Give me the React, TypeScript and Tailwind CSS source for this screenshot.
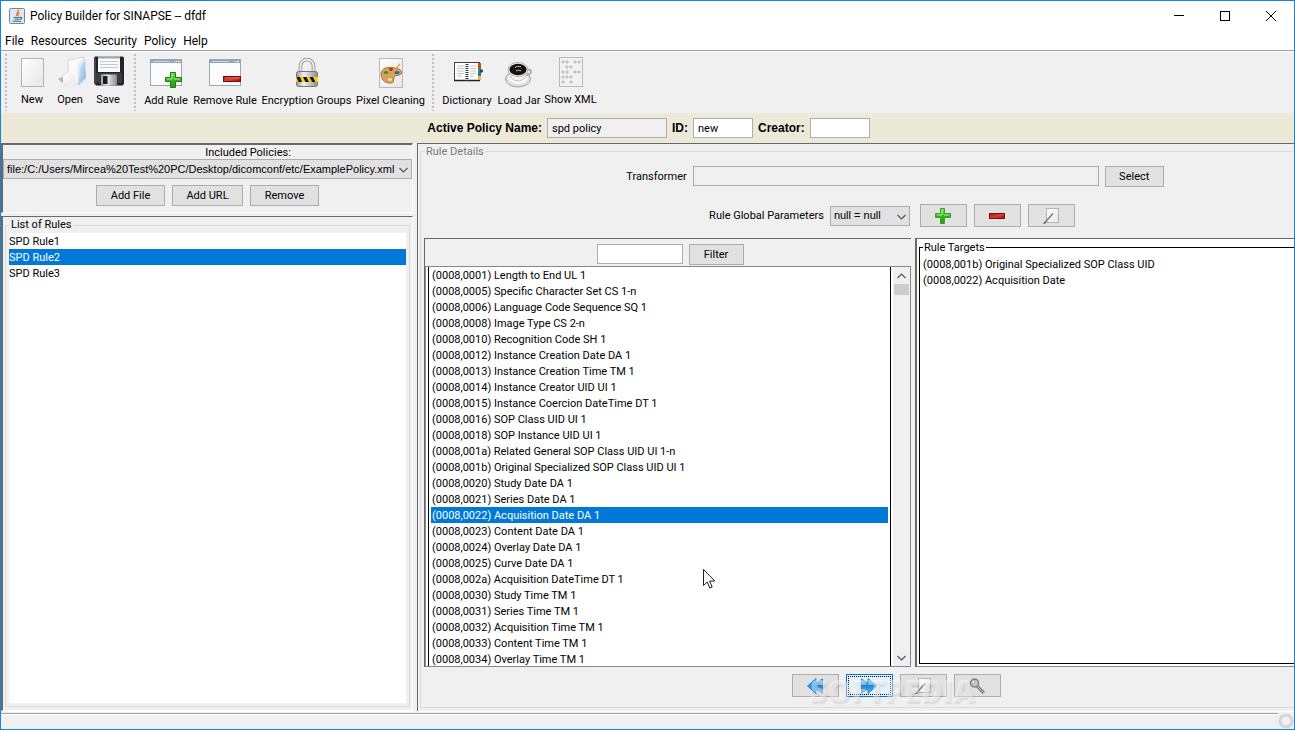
import { useState } from "react";
import type { ReactNode } from "react";

const RULES = ["SPD Rule1", "SPD Rule2", "SPD Rule3"];

const TAGS = [
  "(0008,0001) Length to End UL 1",
  "(0008,0005) Specific Character Set CS 1-n",
  "(0008,0006) Language Code Sequence SQ 1",
  "(0008,0008) Image Type CS 2-n",
  "(0008,0010) Recognition Code SH 1",
  "(0008,0012) Instance Creation Date DA 1",
  "(0008,0013) Instance Creation Time TM 1",
  "(0008,0014) Instance Creator UID UI 1",
  "(0008,0015) Instance Coercion DateTime DT 1",
  "(0008,0016) SOP Class UID UI 1",
  "(0008,0018) SOP Instance UID UI 1",
  "(0008,001a) Related General SOP Class UID UI 1-n",
  "(0008,001b) Original Specialized SOP Class UID UI 1",
  "(0008,0020) Study Date DA 1",
  "(0008,0021) Series Date DA 1",
  "(0008,0022) Acquisition Date DA 1",
  "(0008,0023) Content Date DA 1",
  "(0008,0024) Overlay Date DA 1",
  "(0008,0025) Curve Date DA 1",
  "(0008,002a) Acquisition DateTime DT 1",
  "(0008,0030) Study Time TM 1",
  "(0008,0031) Series Time TM 1",
  "(0008,0032) Acquisition Time TM 1",
  "(0008,0033) Content Time TM 1",
  "(0008,0034) Overlay Time TM 1",
];

const TARGETS = [
  "(0008,001b) Original Specialized SOP Class UID",
  "(0008,0022) Acquisition Date",
];

/* ---------- shared gradients ---------- */

function Gradients() {
  return (
    <svg className="absolute size-0" aria-hidden="true">
      <defs>
        <linearGradient id="paper" x1="0" y1="0" x2="1" y2="1">
          <stop offset="0" stopColor="#ffffff" />
          <stop offset="1" stopColor="#e6e6e6" />
        </linearGradient>
        <linearGradient id="green" x1="0" y1="0" x2="0" y2="1">
          <stop offset="0" stopColor="#7be05c" />
          <stop offset="0.5" stopColor="#35b41f" />
          <stop offset="1" stopColor="#2a9a18" />
        </linearGradient>
        <linearGradient id="red" x1="0" y1="0" x2="1" y2="1">
          <stop offset="0" stopColor="#a01212" />
          <stop offset="0.5" stopColor="#d8403a" />
          <stop offset="1" stopColor="#8d0c0c" />
        </linearGradient>
        <linearGradient id="blue" x1="0" y1="0" x2="0" y2="1">
          <stop offset="0" stopColor="#7cc4f5" />
          <stop offset="0.5" stopColor="#1f8fe6" />
          <stop offset="1" stopColor="#45b4f7" />
        </linearGradient>
        <linearGradient id="folder" x1="0" y1="0" x2="1" y2="1">
          <stop offset="0" stopColor="#e3f1fb" />
          <stop offset="1" stopColor="#7fb2de" />
        </linearGradient>
        <linearGradient id="steel" x1="0" y1="0" x2="1" y2="0">
          <stop offset="0" stopColor="#9a9a9a" />
          <stop offset="0.35" stopColor="#f2f2f2" />
          <stop offset="1" stopColor="#8c8c8c" />
        </linearGradient>
      </defs>
    </svg>
  );
}

/* ---------- toolbar icons, 32x32 ---------- */

function Icon({ children }: { children: ReactNode }) {
  return (
    <svg width="32" height="32" viewBox="0 0 32 32" aria-hidden="true">
      {children}
    </svg>
  );
}

const newIcon = (
  <Icon>
    <rect x="5.5" y="3.5" width="22" height="28" fill="url(#paper)" stroke="#b4b4b4" />
  </Icon>
);

const openIcon = (
  <Icon>
    <path d="M4 24 L10 21 L11 30 Z" fill="#8f8f8f" opacity="0.6" />
    <path d="M14 5 L30 2 L26 28 L12 30 L9 20 L14 17 Z" fill="#f9f9f9" stroke="#d0d0d0" strokeWidth="0.8" />
    <path d="M13 18 L22 20 L22 31 L9 29 V21 Z" fill="url(#paper)" />
    <path d="M24 9 L31 3 L32 23 L24 31 Z" fill="url(#folder)" />
    <path d="M24 9 L31 3 L31 6 L26 12 L25 30 Z" fill="#fff" opacity="0.4" />
  </Icon>
);

const saveIcon = (
  <Icon>
    <path d="M3 1.5 H31 L32 3 V29 L30.5 30.5 H4 L2 28 V3 Z" fill="#23252b" />
    <path d="M4 18 H30 V28 H4 Z" fill="#3a3d46" />
    <rect x="6" y="1.5" width="22" height="15.5" fill="#fafafc" />
    <rect x="6" y="1.5" width="22" height="2" fill="#9aa6b8" />
    <path d="M8 6.5 H26 M8 9.5 H26 M8 12.5 H26" stroke="#c3cad6" strokeWidth="1" />
    <rect x="9" y="19.5" width="16" height="11" fill="url(#steel)" />
    <rect x="11" y="21" width="4.5" height="8" fill="#1c1d22" />
    <path d="M3 3 V28" stroke="#6f7480" strokeWidth="0.8" />
  </Icon>
);

const windowShape = (
  <>
    <rect x="0.5" y="3.5" width="31" height="26" fill="#fcfcfd" stroke="#9aa7b8" />
    <rect x="1" y="4" width="30" height="3" fill="#8fa5c0" />
    <path d="M3 5.5 H20" stroke="#c9d6e6" />
    <path d="M24 5.5 H25 M26 5.5 H27 M28 5.5 H30" stroke="#fff" />
  </>
);

const addRuleIcon = (
  <Icon>
    {windowShape}
    <path d="M20.5 16.5 H25.5 V21.5 H31.5 V25.5 H25.5 V31.5 H20.5 V25.5 H15.5 V21.5 H20.5 Z" fill="url(#green)" stroke="#1d7d12" />
    <path d="M22 18 V23 H17 M24 23 H30" fill="none" stroke="#a4ee8c" />
  </Icon>
);

const removeRuleIcon = (
  <Icon>
    {windowShape}
    <rect x="14.5" y="20.5" width="17" height="5" fill="url(#red)" stroke="#7c0b0b" />
    <path d="M16 22 H30" stroke="#e8726c" strokeWidth="0.8" />
  </Icon>
);

const lockIcon = (
  <Icon>
    <path d="M9.5 17 V10 A6.5 6.5 0 0 1 22.5 10 V17" fill="none" stroke="#8a8a8a" strokeWidth="3.6" />
    <path d="M9.5 17 V10 A6.5 6.5 0 0 1 22.5 10 V17" fill="none" stroke="#ececec" strokeWidth="2" />
    <rect x="5.5" y="15.5" width="21" height="15" rx="2" fill="url(#steel)" stroke="#777" />
    <rect x="5" y="21" width="22" height="5" fill="#f6d512" />
    <path d="M5.5 21 H9 L11 26 H7.5 Z M12 21 H15.5 L18 26 H14.5 Z M18.5 21 H22 L24.5 26 H21 Z" fill="#161616" />
  </Icon>
);

const paletteIcon = (
  <Icon>
    <rect x="4.5" y="2.5" width="23" height="29" fill="url(#paper)" stroke="#b9b9b9" />
    <path d="M6 18 C6 12 14 10 20 12 C26 13 28 16 26 18 C24 20 20 19 19 21 C18 24 20 27 15 27 C9 27 6 23 6 18 Z" fill="#d9a256" stroke="#8e5f22" strokeWidth="0.8" />
    <ellipse cx="16" cy="13.5" rx="2" ry="1.4" fill="#c82222" />
    <ellipse cx="11" cy="16.5" rx="2.2" ry="1.5" fill="#2f9a2a" />
    <ellipse cx="22" cy="16.5" rx="2.6" ry="1.5" fill="#2b5fc0" />
    <ellipse cx="15" cy="23.5" rx="2" ry="1.3" fill="#f5e6c8" />
    <path d="M17 17 L25 8" stroke="#e2a63a" strokeWidth="1.4" />
  </Icon>
);

const dictionaryIcon = (
  <Icon>
    <rect x="3.5" y="6.5" width="25" height="18" fill="#fff" stroke="#444" />
    <path d="M3 24.5 H29" stroke="#222" strokeWidth="1.5" />
    <path d="M6 10 H13.5 M6 12.5 H13.5 M6 15 H13.5 M6 17.5 H13.5 M6 20 H11 M19 10 H25 M19 12.5 H25 M19 15 H25 M19 17.5 H25 M19 20 H23" stroke="#c4c4c4" />
    <path d="M16 6 V25" stroke="#333" strokeWidth="3" strokeDasharray="1 1" />
    <rect x="27" y="7" width="3" height="5" fill="#e23a22" />
    <rect x="27" y="12" width="3" height="4" fill="#2c9c3c" />
    <rect x="27" y="16" width="3" height="4" fill="#2c6fd2" />
    <rect x="27" y="20" width="3" height="4" fill="#f2b71c" />
    <circle cx="30.5" cy="15" r="1.3" fill="#666" stroke="#222" strokeWidth="0.8" />
  </Icon>
);

const coffeeIcon = (
  <Icon>
    <ellipse cx="15" cy="23" rx="12.5" ry="8" fill="#e0dddd" stroke="#aaa5a5" />
    <ellipse cx="15" cy="22" rx="10" ry="6" fill="#fafafa" />
    <path d="M24 14 C30 12 29 19 23 19" fill="none" stroke="#b5b0b0" strokeWidth="2" />
    <path d="M6 14 C6 21 10 25 15 25 C20 25 24 21 24 14 Z" fill="#f3f1f1" stroke="#b5b0b0" strokeWidth="0.8" />
    <ellipse cx="15" cy="13.5" rx="10" ry="7" fill="#efecec" stroke="#a9a3a3" strokeWidth="0.8" />
    <ellipse cx="15" cy="13.5" rx="8.6" ry="5.8" fill="#15100e" />
    <path d="M12 12 C13 10 16 10 18 11 M13 15 C15 14 16 14 18 15" fill="none" stroke="#d9c8ba" strokeWidth="1" />
  </Icon>
);

const xmlIcon = (
  <Icon>
    <rect x="4.5" y="2.5" width="23" height="29" fill="#f1f1f1" stroke="#b9b9b9" />
    <g fill="none" stroke="#8f8f8f" strokeWidth="0.6">
      {[
        [8, 7], [12, 7], [20, 7], [24, 7],
        [12, 12], [16, 12],
        [8, 17], [12, 17], [20, 17], [24, 17],
        [8, 22], [12, 22], [16, 22],
        [8, 27], [16, 27],
      ].map(([cx, cy]) => (
        <circle key={`${cx}-${cy}`} cx={cx} cy={cy} r="1.1" />
      ))}
    </g>
  </Icon>
);

/* ---------- small 16x16 icons ---------- */

function SmallIcon({ children }: { children: ReactNode }) {
  return (
    <svg width="16" height="16" viewBox="0 0 16 16" aria-hidden="true">
      {children}
    </svg>
  );
}

const plusIcon = (
  <SmallIcon>
    <path d="M5.5 0.5 H9.5 V5.5 H15.5 V9.5 H9.5 V15.5 H5.5 V9.5 H0.5 V5.5 H5.5 Z" fill="url(#green)" stroke="#39a127" />
    <path d="M7 2 V7 H2 M9 7 H14" fill="none" stroke="#a7ef90" />
  </SmallIcon>
);

const minusIcon = (
  <SmallIcon>
    <rect x="0.5" y="5.5" width="15" height="5" fill="url(#red)" stroke="#8a0d0d" />
  </SmallIcon>
);

const editIcon = (
  <SmallIcon>
    <rect x="3.5" y="0.5" width="12" height="14" fill="url(#paper)" stroke="#b4b4b4" />
    <path d="M1 15.5 L10 5.5" stroke="#7d7d7d" strokeWidth="1.6" />
    <path d="M0.5 16 L3 13.5" stroke="#555" strokeWidth="1" />
  </SmallIcon>
);

const rewindIcon = (
  <SmallIcon>
    <path d="M9 0.5 V5 L15.5 1 V15 L9 11 V15.5 L0.5 8 Z" fill="url(#blue)" stroke="#2f86cf" />
    <path d="M15.5 1 L8 8 L15.5 15" fill="none" stroke="#2f86cf" />
  </SmallIcon>
);

const forwardIcon = (
  <SmallIcon>
    <path d="M7 0.5 V5 L0.5 1 V15 L7 11 V15.5 L15.5 8 Z" fill="url(#blue)" stroke="#2f86cf" />
    <path d="M0.5 1 L8 8 L0.5 15" fill="none" stroke="#2f86cf" />
  </SmallIcon>
);

const keyIcon = (
  <SmallIcon>
    <path d="M8 8 L15 15" stroke="#777" strokeWidth="3" />
    <path d="M8 8 L15 15" stroke="#c4c4c4" strokeWidth="1" />
    <circle cx="5.5" cy="5" r="4" fill="#c9c9c9" stroke="#808080" strokeWidth="1.4" />
    <circle cx="4.5" cy="4" r="1.5" fill="#f5f5f5" stroke="#8a8a8a" strokeWidth="0.6" />
  </SmallIcon>
);

function JavaIcon() {
  return (
    <svg width="16" height="16" viewBox="0 0 16 16" aria-hidden="true">
      <rect x="0.5" y="0.5" width="15" height="15" rx="1" fill="#dfe7ee" stroke="#6f8799" />
      <path d="M9 1.5 C11 4 6 5 8 8 M10.5 4.5 C8 5.5 9.5 6.5 9 8" fill="none" stroke="#e8762c" strokeWidth="1.3" />
      <path d="M4.5 9.5 H11 M5.5 11.3 H10.5 M3.5 13.3 H12 M11 9.3 C13.5 9 13 11 11 11.3" fill="none" stroke="#3f6d91" strokeWidth="1.1" />
    </svg>
  );
}

function Chevron({ up = false }: { up?: boolean }) {
  return (
    <svg width="9" height="6" viewBox="0 0 9 6" fill="none" stroke="#555" strokeWidth="1.2" aria-hidden="true">
      <path d={up ? "M0.5 5 L4.5 1 L8.5 5" : "M0.5 1 L4.5 5 L8.5 1"} />
    </svg>
  );
}

/* ---------- controls ---------- */

function ToolButton({ icon, label, width, low = false }: { icon: ReactNode; label: string; width: string; low?: boolean }) {
  return (
    <button className={`flex flex-col items-center shrink-0 gap-1 ${width} ${low ? "pt-1" : "pt-[3px]"}`}>
      {icon}
      <span className="h-4 leading-[18px] whitespace-nowrap">{label}</span>
    </button>
  );
}

function Grip() {
  return (
    <div className="w-[2px] shrink-0 my-[2px] bg-[repeating-linear-gradient(to_bottom,#c0c0c0_0px,#c0c0c0_2px,transparent_2px,transparent_4px)]" />
  );
}

function PushButton({ children, className }: { children: ReactNode; className: string }) {
  return (
    <button className={`h-[21px] border border-[#adadad] bg-[#e1e1e1] pt-[2px] ${className}`}>{children}</button>
  );
}

function IconButton({ children, label, focused = false }: { children: ReactNode; label: string; focused?: boolean }) {
  if (focused) {
    return (
      <button aria-label={label} className="h-[23px] w-[47px] border border-[#0078d7] bg-[#e5f1fb] p-px">
        <span className="flex size-full items-center justify-center border border-dotted border-black">{children}</span>
      </button>
    );
  }
  return (
    <button aria-label={label} className="flex h-[23px] w-[47px] items-center justify-center border border-[#adadad] bg-[#e1e1e1]">
      {children}
    </button>
  );
}

function Combo({ id, value, className }: { id: string; value: string; className: string }) {
  return (
    <div className={`relative ${className}`}>
      <select
        id={id}
        className="h-5 w-full appearance-none border border-[#adadad] bg-[#e1e1e1] pl-[3px] pr-3 font-['Liberation_Sans',Arial,sans-serif] outline-none"
      >
        <option>{value}</option>
      </select>
      <span className="pointer-events-none absolute right-1 top-2">
        <Chevron />
      </span>
    </div>
  );
}

const field = "h-5 border border-[#abadb3] px-1 outline-none";

export default function App() {
  const [rule, setRule] = useState("SPD Rule2");
  const [tag, setTag] = useState("(0008,0022) Acquisition Date DA 1");

  return (
    <div className="relative flex min-h-screen flex-col overflow-hidden border border-[#1883d7] bg-[#f0f0f0] font-[Roboto,'Liberation_Sans',sans-serif] text-[11px] text-black">
      <Gradients />

      {/* Title bar */}
      <header className="flex h-[30px] items-center bg-white pl-2 text-xs">
        <JavaIcon />
        <h1 className="flex-1 pl-[5px]">Policy Builder for SINAPSE -- dfdf</h1>
        <button aria-label="Minimize" className="flex h-full w-[46px] items-center justify-center">
          <svg width="10" height="10" viewBox="0 0 10 10" stroke="#000"><path d="M0 4.5 H10" /></svg>
        </button>
        <button aria-label="Maximize" className="flex h-full w-[46px] items-center justify-center">
          <svg width="10" height="10" viewBox="0 0 10 10" fill="none" stroke="#000"><rect x="0.5" y="0.5" width="9" height="9" /></svg>
        </button>
        <button aria-label="Close" className="flex h-full w-[46px] items-center justify-center">
          <svg width="10" height="10" viewBox="0 0 10 10" stroke="#000"><path d="M0 0 L10 10 M10 0 L0 10" /></svg>
        </button>
      </header>

      {/* Menu bar */}
      <nav className="flex h-5 gap-[7px] border-b border-[#a0a0a0] bg-white pl-1 text-xs leading-5">
        <button>File</button>
        <button>Resources</button>
        <button>Security</button>
        <button>Policy</button>
        <button>Help</button>
      </nav>

      {/* Toolbar */}
      <div className="flex h-[62px] border-t border-white">
        <div className="flex pl-1">
          <Grip />
          <div className="flex pl-[6px] pr-[7px]">
            <ToolButton icon={newIcon} label="New" width="w-[38px]" />
            <ToolButton icon={openIcon} label="Open" width="w-[38px]" />
            <ToolButton icon={saveIcon} label="Save" width="w-[38px]" />
          </div>
        </div>
        <div className="flex">
          <Grip />
          <div className="flex pl-[6px] pr-1">
            <ToolButton icon={addRuleIcon} label="Add Rule" width="w-12" low />
            <ToolButton icon={removeRuleIcon} label="Remove Rule" width="w-[70px]" low />
            <ToolButton icon={lockIcon} label="Encryption Groups" width="w-[93px]" low />
            <ToolButton icon={paletteIcon} label="Pixel Cleaning" width="w-[75px]" low />
          </div>
        </div>
        <div className="flex">
          <Grip />
          <div className="flex pl-[6px]">
            <ToolButton icon={dictionaryIcon} label="Dictionary" width="w-[54px]" low />
            <ToolButton icon={coffeeIcon} label="Load Jar" width="w-[50px]" low />
            <ToolButton icon={xmlIcon} label="Show XML" width="w-[53px]" />
          </div>
        </div>
      </div>

      {/* Active policy */}
      <form className="flex h-[30px] items-center justify-center gap-[5px] bg-[#ece9d8] pl-[2px]" onSubmit={(e) => e.preventDefault()}>
        <label htmlFor="policy-name" className="font-['Liberation_Sans',Arial,sans-serif] text-xs font-bold">Active Policy Name:</label>
        <input id="policy-name" readOnly defaultValue="spd policy" className={`${field} w-[120px] bg-[#f0f0f0]`} />
        <label htmlFor="policy-id" className="font-['Liberation_Sans',Arial,sans-serif] text-xs font-bold">ID:</label>
        <input id="policy-id" defaultValue="new" className={`${field} w-[60px] bg-white`} />
        <label htmlFor="policy-creator" className="font-['Liberation_Sans',Arial,sans-serif] text-xs font-bold">Creator:</label>
        <input id="policy-creator" className={`${field} w-[60px] bg-white`} />
      </form>

      <main className="flex flex-1 gap-1">
        {/* Left column */}
        <div className="flex w-[412px] shrink-0 flex-col gap-[3px]">
          <section className="flex flex-col items-center border-t-2 border-r border-b border-l-2 border-t-[#696969] border-l-[#696969] border-r-white border-b-white pb-[6px]">
            <label htmlFor="included" className="h-[14px] self-center pl-[81px] leading-4">Included Policies:</label>
            <Combo id="included" value="file:/C:/Users/Mircea%20Test%20PC/Desktop/dicomconf/etc/ExamplePolicy.xml" className="w-full" />
            <div className="flex gap-[7px] pt-[6px]">
              <PushButton className="w-[69px]">Add File</PushButton>
              <PushButton className="w-[71px]">Add URL</PushButton>
              <PushButton className="w-[69px]">Remove</PushButton>
            </div>
          </section>
          <section className="flex flex-1 flex-col border-t border-r border-b border-l-2 border-t-[#696969] border-l-[#696969] border-r-white border-b-white px-[2px] pb-[3px]">
            <fieldset className="flex flex-1 flex-col border border-[#dcdcdc] px-[3px] pb-[3px]">
              <legend className="px-[2px] leading-4">List of Rules</legend>
              <ul className="flex-1 bg-white">
                {RULES.map((r) => (
                  <li key={r}>
                    <button
                      onClick={() => setRule(r)}
                      className={`block h-4 w-full text-left leading-[18px] ${r === rule ? "bg-[#0078d7] text-white" : ""}`}
                    >
                      {r}
                    </button>
                  </li>
                ))}
              </ul>
            </fieldset>
          </section>
        </div>

        {/* Rule details, wider than the window and cut off at its edge */}
        <section className="min-w-0 flex-1 overflow-hidden border-t border-l border-[#696969] pb-[3px] pl-[2px]">
          <fieldset className="min-w-[952px] border border-[#dcdcdc] px-[3px] pb-[10px]">
            <legend className="ml-px h-[14px] px-px leading-4 text-[#7a7a7a]">Rule Details</legend>

            <div className="flex justify-center gap-[6px] pt-2 pr-[2px]">
              <label htmlFor="transformer" className="h-5 leading-[22px]">Transformer</label>
              <input id="transformer" readOnly className={`${field} w-[406px] bg-[#f0f0f0]`} />
              <PushButton className="w-[59px]">Select</PushButton>
            </div>

            <div className="flex items-center justify-center gap-[6px] pt-[17px] pr-2">
              <label htmlFor="params" className="h-5 leading-5">Rule Global Parameters</label>
              <Combo id="params" value="null = null" className="mr-1 w-20" />
              <div className="flex gap-[7px]">
                <IconButton label="Add parameter">{plusIcon}</IconButton>
                <IconButton label="Remove parameter">{minusIcon}</IconButton>
                <IconButton label="Edit parameter">{editIcon}</IconButton>
              </div>
            </div>

            <div className="flex gap-1 pt-[11px]">
              <div className="w-[487px] shrink-0 border-t border-l border-[#696969]">
                <div className="flex justify-center gap-[6px] pt-[5px] pb-px pl-1">
                  <input aria-label="Filter text" className={`${field} w-[86px] bg-white`} />
                  <PushButton className="w-[55px]">Filter</PushButton>
                </div>
                <div className="flex border border-[#828790] bg-white">
                  <ul className="ml-[2px] max-h-[399px] flex-1 overflow-hidden border-x border-black px-[2px]">
                    {TAGS.map((t) => (
                      <li key={t}>
                        <button
                          onClick={() => setTag(t)}
                          className={`block h-4 w-full pl-px text-left leading-[18px] ${t === tag ? "bg-[#0078d7] text-white" : ""}`}
                        >
                          {t}
                        </button>
                      </li>
                    ))}
                  </ul>
                  <div className="ml-[2px] flex w-[17px] flex-col items-center bg-[#f0f0f0]">
                    <span className="flex h-[17px] items-center"><Chevron up /></span>
                    <span className="h-[11px] w-[15px] bg-[#cdcdcd]" />
                    <span className="mt-auto flex h-[17px] items-center"><Chevron /></span>
                  </div>
                </div>
              </div>

              <div className="flex flex-1 flex-col border-t border-b border-l-2 border-t-[#696969] border-b-[#828790] border-l-[#696969] bg-white px-[2px] pb-[2px]">
                <fieldset className="flex-1 border border-black px-[3px]">
                  <legend className="h-4 px-px leading-[18px]">Rule Targets</legend>
                  <ul className="pt-px">
                    {TARGETS.map((t) => (
                      <li key={t} className="h-4 leading-[18px]">{t}</li>
                    ))}
                  </ul>
                </fieldset>
              </div>
            </div>

            <div className="relative flex justify-center gap-[7px] pt-[7px]">
              <IconButton label="Remove target">{rewindIcon}</IconButton>
              <IconButton label="Add target" focused>{forwardIcon}</IconButton>
              <IconButton label="Edit target">{editIcon}</IconButton>
              <IconButton label="Key">{keyIcon}</IconButton>
              <span className="pointer-events-none absolute top-2 left-[386px] font-['Open_Sans',sans-serif] text-3xl leading-8 font-extrabold text-white/45 [text-shadow:1px_2px_2px_rgba(0,0,0,0.1)]">
                SOFTPEDIA
              </span>
            </div>
          </fieldset>
        </section>
      </main>

      {/* Status bar */}
      <footer className="border-t border-white pt-px">
        <div className="relative h-4 border-t border-[#a0a0a0]">
          <div className="border-t border-white" />
          <svg className="absolute right-0 bottom-0 bg-[#f0f0f0]" width="16" height="16" viewBox="0 0 16 16" aria-hidden="true">
            <circle cx="8" cy="8" r="6" fill="none" stroke="#d3d5db" strokeWidth="3" />
          </svg>
        </div>
      </footer>

      {/* Mouse pointer */}
      <svg className="pointer-events-none absolute top-[568px] left-[702px]" width="13" height="20" viewBox="0 0 13 20" aria-hidden="true">
        <path d="M0.5 0.5 V16.5 L4.2 13 L6.8 19 L9.2 18 L6.6 12 H11.8 Z" fill="#fff" stroke="#1b1b2b" />
      </svg>
    </div>
  );
}
